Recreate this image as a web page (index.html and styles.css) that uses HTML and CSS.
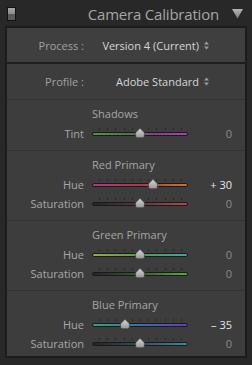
FILE: index.html
```html
<!DOCTYPE html>
<html>
<head>
<meta charset="utf-8">
<link rel="stylesheet" href="styles.css">
</head>
<body>
<div class="header">
  <div class="grip"><div class="grip-top"></div></div>
  <div class="title">Camera Calibration</div>
  <svg class="tri" width="11" height="10" viewBox="0 0 11 10">
    <defs><linearGradient id="tg" x1="0" y1="0" x2="0" y2="1"><stop offset="0" stop-color="#b4b4b4"/><stop offset="1" stop-color="#7c7c7c"/></linearGradient></defs>
    <polygon points="0,0 11,0 5.5,9.5" fill="url(#tg)"/>
  </svg>
</div>
<div class="panel">
  <div class="selrow process">
    <span class="slabel">Process :</span>
    <span class="sval">Version 4 (Current)</span>
    <svg class="updown" width="5" height="9" viewBox="0 0 5 9"><polygon points="0,3.5 5,3.5 2.5,0.5" fill="#9a9a9a"/><polygon points="0,5.5 5,5.5 2.5,8.5" fill="#9a9a9a"/></svg>
  </div>
  <div class="selrow profile">
    <span class="slabel">Profile :</span>
    <span class="sval">Adobe Standard</span>
    <svg class="updown" width="5" height="9" viewBox="0 0 5 9"><polygon points="0,3.5 5,3.5 2.5,0.5" fill="#9a9a9a"/><polygon points="0,5.5 5,5.5 2.5,8.5" fill="#9a9a9a"/></svg>
  </div>

  <div class="section">
    <div class="sec-title">Shadows</div>
    <div class="srow">
      <span class="lbl">Tint</span>
      <div class="slider"><div class="ticks"><i></i><i></i><i></i><i></i><i></i><i></i><i></i><i></i><i></i><i></i><i></i></div><div class="track tint"></div><svg class="thumb" style="left:50%" width="10" height="10" viewBox="0 0 10 10"><use href="#th"/></svg></div>
      <span class="val">0</span>
    </div>
  </div>

  <div class="section">
    <div class="sec-title">Red Primary</div>
    <div class="srow">
      <span class="lbl">Hue</span>
      <div class="slider"><div class="ticks"><i></i><i></i><i></i><i></i><i></i><i></i><i></i><i></i><i></i><i></i><i></i></div><div class="track red-hue"></div><svg class="thumb" style="left:63.1%" width="10" height="10" viewBox="0 0 10 10"><use href="#th"/></svg></div>
      <span class="val bright">+ 30</span>
    </div>
    <div class="srow">
      <span class="lbl">Saturation</span>
      <div class="slider"><div class="ticks"><i></i><i></i><i></i><i></i><i></i><i></i><i></i><i></i><i></i><i></i><i></i></div><div class="track red-sat"></div><svg class="thumb" style="left:50%" width="10" height="10" viewBox="0 0 10 10"><use href="#th"/></svg></div>
      <span class="val">0</span>
    </div>
  </div>

  <div class="section">
    <div class="sec-title">Green Primary</div>
    <div class="srow">
      <span class="lbl">Hue</span>
      <div class="slider"><div class="ticks"><i></i><i></i><i></i><i></i><i></i><i></i><i></i><i></i><i></i><i></i><i></i></div><div class="track green-hue"></div><svg class="thumb" style="left:50%" width="10" height="10" viewBox="0 0 10 10"><use href="#th"/></svg></div>
      <span class="val">0</span>
    </div>
    <div class="srow">
      <span class="lbl">Saturation</span>
      <div class="slider"><div class="ticks"><i></i><i></i><i></i><i></i><i></i><i></i><i></i><i></i><i></i><i></i><i></i></div><div class="track green-sat"></div><svg class="thumb" style="left:50%" width="10" height="10" viewBox="0 0 10 10"><use href="#th"/></svg></div>
      <span class="val">0</span>
    </div>
  </div>

  <div class="section">
    <div class="sec-title">Blue Primary</div>
    <div class="srow">
      <span class="lbl">Hue</span>
      <div class="slider"><div class="ticks"><i></i><i></i><i></i><i></i><i></i><i></i><i></i><i></i><i></i><i></i><i></i></div><div class="track blue-hue"></div><svg class="thumb" style="left:34.7%" width="10" height="10" viewBox="0 0 10 10"><use href="#th"/></svg></div>
      <span class="val bright">– 35</span>
    </div>
    <div class="srow">
      <span class="lbl">Saturation</span>
      <div class="slider"><div class="ticks"><i></i><i></i><i></i><i></i><i></i><i></i><i></i><i></i><i></i><i></i><i></i></div><div class="track blue-sat"></div><svg class="thumb" style="left:50%" width="10" height="10" viewBox="0 0 10 10"><use href="#th"/></svg></div>
      <span class="val">0</span>
    </div>
  </div>
</div>
<svg class="defs" width="0" height="0">
  <defs>
    <linearGradient id="thg" x1="0" y1="0" x2="0" y2="1"><stop offset="0" stop-color="#d8d8d8"/><stop offset="1" stop-color="#969696"/></linearGradient>
    <path id="th" d="M5 0.3 L9.4 4.8 L9.4 8 Q9.4 9.7 7.7 9.7 L2.3 9.7 Q0.6 9.7 0.6 8 L0.6 4.8 Z" fill="url(#thg)" stroke="#3a3a3a" stroke-width="0.6"/>
  </defs>
</svg>
</body>
</html>
```

FILE: styles.css
```css
html, body {
  margin: 0;
  padding: 0;
}
body {
  width: 252px;
  height: 365px;
  background: #282828;
  font-family: "Open Sans", "DejaVu Sans", sans-serif;
  overflow: hidden;
}
.defs {
  position: absolute;
}
.header {
  height: 26px;
  display: flex;
  align-items: center;
  padding: 0 9px 0 7px;
  box-sizing: border-box;
}
.grip {
  width: 7px;
  height: 12px;
  border: 1px solid #111;
  background: #5a5a5a;
  margin-top: 1px;
}
.grip-top {
  height: 6px;
  background: linear-gradient(#a8a8a8, #8a8a8a);
}
.title {
  flex: 1;
  text-align: right;
  font-size: 15px;
  letter-spacing: -0.2px;
  color: #a6a6a6;
  margin-right: 13px;
  margin-top: 1px;
}
.tri {
  display: block;
  margin-top: 1px;
}
.panel {
  margin: 0 5px;
  border: 2px solid #1c1c1c;
  background: #3d3d3d;
  height: 332px;
  box-sizing: border-box;
}
.selrow {
  display: flex;
  align-items: center;
  font-size: 11px;
}
.process {
  height: 34px;
  border-bottom: 2px solid #1f1f1f;
  background: #3f3f3f;
}
.profile {
  height: 35px;
}
.slabel {
  width: 77px;
  text-align: right;
  color: #a2a2a2;
}
.sval {
  flex: 1;
  text-align: right;
  color: #d6d6d6;
}
.updown {
  display: block;
  margin: 0 36px 0 5px;
}
.section {
  border-top: 1px solid #333;
  padding: 6px 0 7px;
}
.sec-title {
  height: 16px;
  line-height: 16px;
  font-size: 11px;
  color: #a6a6a6;
  padding-left: 85px;
  margin-bottom: 2px;
}
.srow {
  display: grid;
  grid-template-columns: 77px 96px 36px;
  column-gap: 8px;
  height: 19px;
  align-items: center;
  font-size: 11px;
}
.lbl {
  text-align: right;
  color: #a8a8a8;
}
.val {
  text-align: right;
  color: #8c8c8c;
}
.val.bright {
  color: #e6e6e6;
}
.slider {
  position: relative;
  height: 19px;
}
.ticks {
  position: absolute;
  left: 7px;
  width: 83px;
  top: 4px;
  height: 2px;
  display: flex;
  justify-content: space-between;
}
.ticks i {
  width: 1px;
  height: 2px;
  background: #262626;
}
.track {
  position: absolute;
  left: 0;
  right: 0;
  top: 8px;
  height: 2px;
  border: 1px solid #1a1a1a;
  border-radius: 2px;
}
.thumb {
  position: absolute;
  top: 4px;
  margin-left: -5px;
  display: block;
}
.tint { background: linear-gradient(90deg, #4e9a3c, #4a7a42 35%, #6a6a6a 50%, #8a3c8a 65%, #b040b0); }
.red-hue { background: linear-gradient(90deg, #b03c7a, #a83a48 50%, #c07a30); }
.red-sat { background: linear-gradient(90deg, #252525, #5a3a3a 50%, #b84848); }
.green-hue { background: linear-gradient(90deg, #9aaa38, #4aa050 50%, #38a8a0); }
.green-sat { background: linear-gradient(90deg, #252525, #3a5a34 50%, #5aa83e); }
.blue-hue { background: linear-gradient(90deg, #3aa078, #3a70a8 50%, #6a3ac0); }
.blue-sat { background: linear-gradient(90deg, #252525, #34505a 50%, #3a88a8); }
```
